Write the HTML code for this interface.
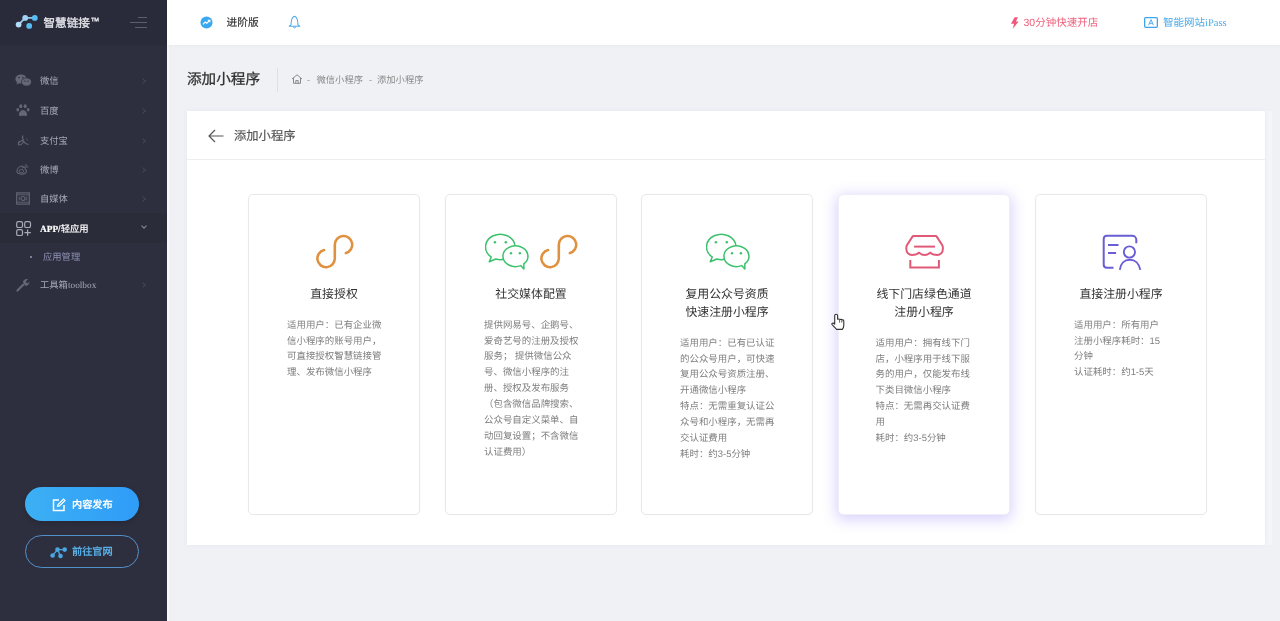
<!DOCTYPE html>
<html lang="zh-CN"><head><meta charset="utf-8">
<style>
*{margin:0;padding:0;box-sizing:border-box}
html,body{width:1280px;height:621px;overflow:hidden;background:#f0f1f5;font-family:"Liberation Sans",sans-serif;text-rendering:geometricPrecision;will-change:transform}
.abs{position:absolute;white-space:nowrap}
.serif{font-family:"Liberation Serif",serif}
.sk{-webkit-text-stroke-width:0.3px}
.sk2{-webkit-text-stroke-width:0.18px}
#side{position:absolute;left:0;top:0;width:167px;height:621px;background:#2e2f3e}
#logo{position:absolute;left:0;top:0;width:167px;height:44px;background:#2a2b3a;box-shadow:0 1px 2px rgba(0,0,0,0.08)}
.mi{position:absolute;left:0;width:167px;height:29px;color:#a6a8b6;font-size:9.3px;line-height:29px;white-space:nowrap}
.mi .t{position:absolute;left:40px;top:1px}
.mi .ar{position:absolute;left:141px;top:12.5px;width:4px;height:4px;border-right:1px solid #434556;border-top:1px solid #434556;transform:rotate(45deg)}
.mi svg{position:absolute;left:15px;top:7px}
#top{position:absolute;left:167px;top:0;width:1113px;height:45px;background:#fff;box-shadow:0 1px 4px rgba(0,0,0,0.03)}
#strip{position:absolute;left:167px;top:0;width:2px;height:621px;background:#f9f9fb}
#panel{position:absolute;left:187px;top:111px;width:1078px;height:434px;background:#fff;box-shadow:0 0 5px rgba(110,110,220,0.07)}
#phead{position:absolute;left:0;top:0;width:1078px;height:49px;border-bottom:1px solid #eeeef1}
.card{position:absolute;top:194px;width:172px;height:321px;border:1px solid #e8e8ea;border-radius:5px;background:#fff;box-shadow:0 0 3px rgba(0,0,0,0.025)}
.card svg{position:absolute;top:38px}
.card .ti{position:absolute;left:0;top:89.5px;width:100%;text-align:center;color:#333;font-size:11.9px;line-height:18px;white-space:nowrap}
.card .ds{position:absolute;left:38px;color:#7e7e7e;font-size:9.45px;line-height:15.9px;white-space:nowrap}
.hov{box-shadow:0 3px 14px 2px rgba(130,110,250,0.3);border-color:#eeeef6}
</style></head><body>
<div id="side">
  <div id="logo">
    <svg class="abs" style="left:14px;top:12px" width="26" height="18" viewBox="0 0 26 18">
      <line x1="4.6" y1="12.6" x2="11.2" y2="5.9" stroke="#9fd3f7" stroke-width="1.6"/>
      <line x1="11.2" y1="5.9" x2="20.8" y2="5.9" stroke="#9fd3f7" stroke-width="1.6"/>
      <circle cx="4.6" cy="12.6" r="2.9" fill="#b3dcf8"/>
      <circle cx="11.2" cy="5.9" r="2.9" fill="#9fd3f7"/>
      <circle cx="20.8" cy="5.9" r="2.9" fill="#58bdf5"/>
      <circle cx="15.2" cy="13.9" r="2.9" fill="#58bdf5"/>
    </svg>
    <span class="abs" style="left:43.5px;top:13px;font-size:11.6px;line-height:16px;color:#e2e3e9;-webkit-text-stroke-width:0.35px">智慧链接<span style="font-size:9px;vertical-align:3px;margin-left:0.5px">™</span></span>
    <div class="abs" style="left:138px;top:17px;width:9px;height:1px;background:#5d5f6e"></div>
    <div class="abs" style="left:129.5px;top:22px;width:17.5px;height:1px;background:#5d5f6e"></div>
    <div class="abs" style="left:135px;top:27px;width:12px;height:1px;background:#5d5f6e"></div>
  </div>
  <div class="mi" style="top:66px">
    <svg width="17" height="13" viewBox="0 0 17 13" style="left:15px;top:8px"><ellipse cx="6" cy="5" rx="5.6" ry="4.6" fill="#656777"/><path d="M2 8 L1.5 10.5 L4.5 9Z" fill="#656777"/><ellipse cx="11.5" cy="8" rx="5" ry="4.1" fill="#656777" stroke="#2e2f3e" stroke-width="0.8"/><circle cx="4" cy="3.6" r="0.8" fill="#2e2f3e"/><circle cx="7.8" cy="3.6" r="0.8" fill="#2e2f3e"/><circle cx="10" cy="7.2" r="0.7" fill="#2e2f3e"/><circle cx="13" cy="7.2" r="0.7" fill="#2e2f3e"/></svg>
    <span class="t">微信</span><i class="ar"></i></div>
  <div class="mi" style="top:96px">
    <svg width="14" height="13" viewBox="0 0 14 13" style="left:15.5px;top:8px"><ellipse cx="4.8" cy="2.2" rx="1.5" ry="2" fill="#656777"/><ellipse cx="9.2" cy="2.2" rx="1.5" ry="2" fill="#656777"/><ellipse cx="1.8" cy="5.8" rx="1.4" ry="1.8" fill="#656777"/><ellipse cx="12.2" cy="5.8" rx="1.4" ry="1.8" fill="#656777"/><path d="M7 6 C4.5 6 2.5 9.5 3 11 C3.5 12.5 5.5 11.8 7 11.8 C8.5 11.8 10.5 12.5 11 11 C11.5 9.5 9.5 6 7 6Z" fill="#656777"/></svg>
    <span class="t">百度</span><i class="ar"></i></div>
  <div class="mi" style="top:126px">
    <svg width="14" height="14" viewBox="0 0 14 14" style="left:16px;top:7px"><path d="M6.6 2.5 V6.2" stroke="#626474" stroke-width="1.3"/><path d="M2 9.5 C4 8 7 7.5 8 6.5 M6.8 7.2 C8 9.5 10 11 12.5 11.5" stroke="#626474" stroke-width="1.2" fill="none"/><path d="M4.5 8.5 C2 9.5 1.5 12 3.5 12 C5 12 6.5 10.5 7.5 9" stroke="#626474" stroke-width="1.1" fill="none"/><path d="M10.5 5.5 L11.5 7.5" stroke="#55576a" stroke-width="0.9"/></svg>
    <span class="t">支付宝</span><i class="ar"></i></div>
  <div class="mi" style="top:155px">
    <svg width="13" height="11" viewBox="0 0 14 12" style="left:16px;top:8.5px"><path d="M5.5 2.5 C2.5 3.5 0.5 6 1 8.2 C1.6 10.8 5 11.5 8 10.8 C11 10 12 8 11 6.5 C10.5 5.8 9.5 5.8 9.8 5 C10.2 3.8 9 3 7.5 3.8 C8 2.5 7 1.8 5.5 2.5Z" stroke="#626474" stroke-width="1.2" fill="none"/><ellipse cx="5.8" cy="7.8" rx="2.5" ry="1.8" stroke="#626474" stroke-width="1" fill="none"/><path d="M9.5 1 C11.5 0.8 13 2 12.8 4 M9.8 2.6 C10.8 2.5 11.4 3 11.3 4" stroke="#626474" stroke-width="1" fill="none"/></svg>
    <span class="t">微博</span><i class="ar"></i></div>
  <div class="mi" style="top:184px">
    <svg width="14" height="13" viewBox="0 0 14 13" style="left:15.5px;top:8px"><rect x="0.7" y="0.9" width="12.6" height="11.2" stroke="#626474" stroke-width="1.2" fill="none"/><path d="M0.7 2.8 H13.3 M0.7 10.2 H13.3" stroke="#626474" stroke-width="0.9"/><circle cx="7" cy="6.5" r="2" stroke="#626474" stroke-width="1.2" fill="none"/><path d="M3.3 4.5 V8.5 M10.7 4.5 V8.5" stroke="#626474" stroke-width="0.9"/></svg>
    <span class="t">自媒体</span><i class="ar"></i></div>
  <div class="mi" style="top:213px;color:#fff;background:#2b2c3a;height:30px;line-height:30px">
    <svg width="16" height="16" viewBox="0 0 16 16" style="left:15.5px;top:8px"><rect x="0.7" y="0.7" width="5.8" height="5.8" rx="1.6" stroke="#a9abb9" stroke-width="1.2" fill="none"/><rect x="8.7" y="0.7" width="5.8" height="5.8" rx="1.6" stroke="#a9abb9" stroke-width="1.2" fill="none"/><rect x="0.7" y="8.7" width="5.8" height="5.8" rx="1.6" stroke="#a9abb9" stroke-width="1.2" fill="none"/><path d="M11.6 8.5 V14.8 M8.5 11.6 H14.8" stroke="#a9abb9" stroke-width="1.2"/></svg>
    <span class="t sk2"><span class="serif" style="font-weight:bold">APP</span>/轻应用</span>
    <i class="abs" style="left:142px;top:11px;width:4px;height:4px;border-right:1px solid #8b8d9b;border-bottom:1px solid #8b8d9b;transform:rotate(45deg)"></i></div>
  <div class="mi" style="top:242px;color:#9294b8">
    <i class="abs" style="left:30px;top:13.5px;width:2px;height:2px;background:#7c7e98"></i>
    <span class="t" style="left:43px">应用管理</span></div>
  <div class="mi" style="top:270px">
    <svg width="14" height="14" viewBox="0 0 14 14" style="left:15.5px;top:8px"><path d="M1.5 12.5 L7.2 6.8" stroke="#656777" stroke-width="2.2" stroke-linecap="round"/><path d="M7 4.5 C7 2 9.5 0.5 12 1.2 L9.8 3.4 L10.5 4.8 L11.9 5.4 L13.3 3.2 C13.8 6 11.5 8.2 9 7.6Z" fill="#656777"/></svg>
    <span class="t">工具箱<span class="serif">toolbox</span></span><i class="ar"></i></div>
  <div class="abs" style="left:24.5px;top:487px;width:114.5px;height:34px;border-radius:17px;background:linear-gradient(90deg,#3cb0f4,#2f9cf7);box-shadow:0 2px 5px rgba(0,0,0,0.18)">
    <svg class="abs" style="left:27px;top:11px" width="14" height="14" viewBox="0 0 14 14"><path d="M7 2 H1.5 V12.5 H12 V7" stroke="#fff" stroke-width="1.5" fill="none"/><path d="M5.5 8.5 L6 6.5 L11.5 1 L13 2.5 L7.5 8Z" stroke="#fff" stroke-width="1.2" fill="none"/></svg>
    <span class="abs" style="left:47.5px;top:11.5px;font-size:10.2px;line-height:14px;color:#fff;font-weight:bold">内容发布</span>
  </div>
  <div class="abs" style="left:24.5px;top:534.5px;width:114.5px;height:33.5px;border-radius:17px;border:1.2px solid #5290cc">
    <svg class="abs" style="left:24px;top:10px" width="18" height="13" viewBox="0 0 18 13">
      <path d="M2.6 9.5 L7.5 3.6 L14.7 3.6 M7.5 3.6 L10.5 10" stroke="#4aa6e2" stroke-width="1.3" fill="none"/>
      <circle cx="2.6" cy="9.5" r="2.3" fill="#4aa6e2"/><circle cx="7.5" cy="3.6" r="2.3" fill="#4aa6e2"/><circle cx="14.7" cy="3.6" r="2.3" fill="#4aa6e2"/><circle cx="10.5" cy="10" r="2.3" fill="#4aa6e2"/>
    </svg>
    <span class="abs" style="left:46.5px;top:10.3px;font-size:10.2px;line-height:14px;color:#55aee6;font-weight:bold">前往官网</span>
  </div>
</div>
<div id="strip"></div>
<div id="top">
  <svg class="abs" style="left:33px;top:15.7px" width="13" height="13" viewBox="0 0 14 14"><circle cx="7" cy="7" r="6.5" fill="#3aa8ee"/><path d="M3.2 9 L5.6 6.4 L7.4 7.8 L10.2 5" stroke="#fff" stroke-width="1.3" fill="none"/><path d="M8.4 4.6 H10.6 V6.8" stroke="#fff" stroke-width="1.3" fill="none"/></svg>
  <span class="abs sk2" style="left:59.5px;top:16.2px;font-size:10.7px;line-height:15px;color:#333">进阶版</span>
  <svg class="abs" style="left:120.5px;top:14.5px" width="13" height="14" viewBox="0 0 13 14"><path d="M6.5 1.2 C4.8 1.9 3.6 3.6 3.3 6.5 L3 9.8 L1.2 11.2 H11.8 L10 9.8 L9.7 6.5 C9.4 3.6 8.2 1.9 6.5 1.2Z" stroke="#52aae6" stroke-width="1.05" fill="none" stroke-linejoin="round"/><path d="M5.2 12.2 Q6.5 13.4 7.8 12.2" stroke="#52aae6" stroke-width="1" fill="none"/></svg>
  <svg class="abs" style="left:842.5px;top:16.5px" width="9" height="12" viewBox="0 0 9 12"><path d="M4.6 0.3 H7.9 L5.9 4.4 H8.6 L2.9 11.7 L4 6.8 H1 Z" fill="#ef5a7c"/></svg>
  <span class="abs" style="left:856.5px;top:15.8px;font-size:10.5px;line-height:15px;color:#f0607c">30分钟快速开店</span>
  <svg class="abs" style="left:977px;top:17px" width="14" height="11" viewBox="0 0 14 11"><rect x="0.65" y="0.65" width="12.7" height="9.7" rx="1" stroke="#42a4e8" stroke-width="1.3" fill="none"/><path d="M4.6 8.2 L7 2.6 L9.4 8.2 M5.5 6.3 H8.5" stroke="#42a4e8" stroke-width="0.9" fill="none"/></svg>
  <span class="abs" style="left:996px;top:15.8px;font-size:10.5px;line-height:15px;color:#4aa8e8">智能网站<span class="serif">iPass</span></span>
</div>
<div class="abs sk" style="left:187px;top:69.5px;font-size:14.6px;line-height:21px;color:#333">添加小程序</div>
<div class="abs" style="left:277px;top:68px;width:1px;height:24px;background:#dfe0e6"></div>
<svg class="abs" style="left:290.5px;top:74px" width="12" height="10" viewBox="0 0 12 10"><path d="M1 5 L6 0.8 L11 5 M2.5 4 V9.3 H9.5 V4 M4.8 9.3 V6.5 H7.2 V9.3" stroke="#8a8a8a" stroke-width="1" fill="none"/></svg>
<span class="abs" style="left:307px;top:74px;font-size:9.3px;line-height:13px;color:#999">-</span>
<span class="abs" style="left:316.5px;top:74px;font-size:9.3px;line-height:13px;color:#8a8a8a">微信小程序</span>
<span class="abs" style="left:369px;top:74px;font-size:9.3px;line-height:13px;color:#999">-</span>
<span class="abs" style="left:377px;top:74px;font-size:9.3px;line-height:13px;color:#8a8a8a">添加小程序</span>
<div class="abs" style="left:1266px;top:111px;width:6px;height:434px;background:#f4f5f8"></div>
<div id="panel">
  <div id="phead">
    <svg class="abs" style="left:20.5px;top:18px" width="16" height="14" viewBox="0 0 16 14"><path d="M7 1 L1 7 L7 13 M1 7 H15.5" stroke="#555" stroke-width="1.2" fill="none"/></svg>
    <span class="abs sk2" style="left:47px;top:15.5px;font-size:12.3px;line-height:18px;color:#555">添加小程序</span>
  </div>
</div>
<div class="card" style="left:248px">
  <svg style="left:66.5px;top:39px" width="40" height="36" viewBox="0 0 40 36"><path d="M8 16.06 A8.7 8.7 0 1 0 18.8 24.5 V10.7 A8.7 8.7 0 1 1 29.9 19.06" stroke="#e0913f" stroke-width="2.6" fill="none" stroke-linecap="round"/></svg>
  <div class="ti">直接授权</div>
  <div class="ds" style="top:122.6px">适用用户：已有企业微<br>信小程序的账号用户，<br>可直接授权智慧链接管<br>理、发布微信小程序</div>
</div>
<div class="card" style="left:445px">
  <svg style="left:39px;top:38px" width="48" height="40" viewBox="0 0 48 40"><path d="M6.2 23.95 L4.3 28.8 L10.74 26.03 A14.75 12.7 0 1 0 6.2 23.95Z" stroke="#3cc26c" stroke-width="1.5" fill="#fff" stroke-linejoin="round"/><circle cx="9.9" cy="9.3" r="1.25" fill="#3cc26c"/><circle cx="20.8" cy="9.3" r="1.25" fill="#3cc26c"/><path d="M35.7 32.6 L38.9 36 L38.8 30.9 A12.5 10.35 0 1 0 35.7 32.6Z" stroke="#3cc26c" stroke-width="1.5" fill="#fff" stroke-linejoin="round"/><circle cx="26" cy="20.2" r="1.2" fill="#3cc26c"/><circle cx="34.9" cy="20.2" r="1.2" fill="#3cc26c"/></svg><svg style="left:94px;top:39px" width="40" height="36" viewBox="0 0 40 36"><path d="M8 16.06 A8.7 8.7 0 1 0 18.8 24.5 V10.7 A8.7 8.7 0 1 1 29.9 19.06" stroke="#e0913f" stroke-width="2.6" fill="none" stroke-linecap="round"/></svg>
  <div class="ti">社交媒体配置</div>
  <div class="ds" style="top:122.6px">提供网易号、企鹅号、<br>爱奇艺号的注册及授权<br>服务； 提供微信公众<br>号、微信小程序的注<br>册、授权及发布服务<br>（包含微信品牌搜索、<br>公众号自定义菜单、自<br>动回复设置；不含微信<br>认证费用）</div>
</div>
<div class="card" style="left:641px">
  <svg style="left:63.7px;top:38px" width="48" height="40" viewBox="0 0 48 40"><path d="M6.2 23.95 L4.3 28.8 L10.74 26.03 A14.75 12.7 0 1 0 6.2 23.95Z" stroke="#3cc26c" stroke-width="1.5" fill="#fff" stroke-linejoin="round"/><circle cx="9.9" cy="9.3" r="1.25" fill="#3cc26c"/><circle cx="20.8" cy="9.3" r="1.25" fill="#3cc26c"/><path d="M35.7 32.6 L38.9 36 L38.8 30.9 A12.5 10.35 0 1 0 35.7 32.6Z" stroke="#3cc26c" stroke-width="1.5" fill="#fff" stroke-linejoin="round"/><circle cx="26" cy="20.2" r="1.2" fill="#3cc26c"/><circle cx="34.9" cy="20.2" r="1.2" fill="#3cc26c"/></svg>
  <div class="ti">复用公众号资质<br>快速注册小程序</div>
  <div class="ds" style="top:140.6px">适用用户：已有已认证<br>的公众号用户，可快速<br>复用公众号资质注册、<br>开通微信小程序<br>特点：无需重复认证公<br>众号和小程序，无需再<br>交认证费用<br>耗时：约3-5分钟</div>
</div>
<div class="card hov" style="left:838px">
  <svg style="left:66px;top:39px" width="42" height="36" viewBox="0 0 42 36"><path d="M8.6 2.1 H30.6 Q31.4 2.1 31.9 2.9 L37.3 11.3 Q37.9 12.3 37.9 14.5 C37.9 18.6 35.4 20.9 32.2 20.9 C29 20.9 26.6 20 25.2 18.6 C23.8 20 21.8 20.9 19.6 20.9 C17.4 20.9 15.4 20 14 18.6 C12.6 20 10.2 20.9 7 20.9 C3.8 20.9 1.3 18.6 1.3 14.5 Q1.3 12.3 1.9 11.3 L7.3 2.9 Q7.8 2.1 8.6 2.1 Z" stroke="#e05a78" stroke-width="2" fill="none" stroke-linejoin="round"/><path d="M9.1 12.6 H30" stroke="#e05a78" stroke-width="2"/><path d="M5.3 26 V33.5 H33.9 V26" stroke="#e05a78" stroke-width="2" fill="none"/></svg>
  <div class="ti">线下门店绿色通道<br>注册小程序</div>
  <div class="ds" style="top:140.6px;left:36.5px">适用用户：拥有线下门<br>店，小程序用于线下服<br>务的用户，仅能发布线<br>下类目微信小程序<br>特点：无需再交认证费<br>用<br>耗时：约3-5分钟</div>
</div>
<div class="card" style="left:1035px">
  <svg style="left:65.6px;top:38.6px" width="42" height="38" viewBox="0 0 42 38"><path d="M11.5 33.7 H5 C3 33.7 1.7 32.4 1.7 30.4 V5 C1.7 3 3 1.7 5 1.7 H30.3 C32.3 1.7 34.3 3.5 34.3 5.7 V9.3" stroke="#6a5ed4" stroke-width="2" fill="none"/><path d="M6 11 H16.5 M6 19.1 H14.1" stroke="#6a5ed4" stroke-width="2"/><circle cx="27.4" cy="18" r="5.6" stroke="#6a5ed4" stroke-width="1.9" fill="none"/><path d="M17.8 35.9 C18.5 29.5 22.5 25.7 27.8 25.7 C33.1 25.7 37.2 29.5 38.3 35.9" stroke="#6a5ed4" stroke-width="1.9" fill="none"/></svg>
  <div class="ti">直接注册小程序</div>
  <div class="ds" style="top:122.6px">适用用户：所有用户<br>注册小程序耗时：15<br>分钟<br>认证耗时：约1-5天</div>
</div>
<svg class="abs" style="left:831px;top:313px" width="15" height="18" viewBox="0 0 15 18"><path d="M3.7 10 V2.6 Q3.7 1.2 5.15 1.2 Q6.6 1.2 6.6 2.6 V6.3 Q8.4 5.6 8.9 6.6 Q10.6 5.9 11.1 7 Q12.8 6.5 12.8 8.2 V12.6 Q12.8 14.6 11.3 16.4 H5.6 L1.1 11.6 Q0.4 10.6 1.4 10.2 Q2.6 9.8 3.7 11.2 Z" fill="#fff" stroke="#333" stroke-width="1.1" stroke-linejoin="round"/><path d="M8.6 7 V9.6 M10.8 7.4 V9.6" stroke="#333" stroke-width="0.8"/></svg>
</body></html>
